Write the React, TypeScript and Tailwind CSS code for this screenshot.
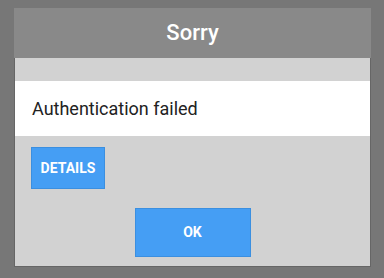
export default function App() {
  return (
    <div
      className="w-[384px] h-[278px] bg-[#777777] pt-[8px] pl-[14px]"
      style={{ fontFamily: "Roboto, 'Noto Sans', sans-serif" }}
    >
      <div className="w-[357px] flex flex-col">
        <div className="h-[50px] bg-[#898989] flex items-center justify-center">
          <span className="text-[22px] font-medium text-white leading-none">Sorry</span>
        </div>
        <div className="h-[209px] bg-[#d2d2d2] border-x border-b border-[#666666] flex flex-col">
          <div className="h-[23px]" />
          <div className="h-[55px] bg-white flex items-center pl-[17px]">
            <span className="text-[18px] text-[#222222] leading-none">Authentication failed</span>
          </div>
          <div className="pt-[11px] pl-[16px]">
            <button className="w-[74px] h-[42px] bg-[#459ef4] border border-[#3b8fe0] text-white font-bold text-[14px] flex items-center justify-center">
              DETAILS
            </button>
          </div>
          <div className="pt-[19px] flex justify-center">
            <button className="w-[116px] h-[49px] bg-[#459ef4] border border-[#3b8fe0] text-white font-bold text-[14px] flex items-center justify-center">
              OK
            </button>
          </div>
        </div>
      </div>
    </div>
  );
}
